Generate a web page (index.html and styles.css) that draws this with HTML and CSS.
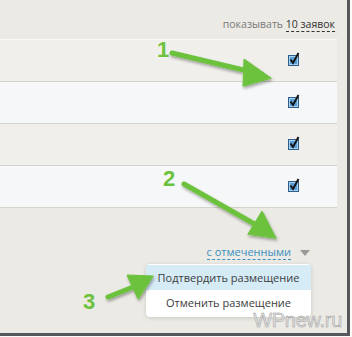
FILE: index.html
```html
<!DOCTYPE html>
<html lang="ru">

<head>
    <meta charset="UTF-8">
    <title>Заявки</title>
    <link rel="stylesheet" href="styles.css">
</head>

<body>
    <div class="frame">
        <!-- Top bar -->
        <div class="toolbar">
            <span class="muted">показывать</span> <span class="dashed">10 заявок</span>
        </div>

        <!-- Rows -->
        <div class="rows">
            <div class="row odd">
                <svg class="check" width="13" height="14" viewBox="0 0 13 14">
                    <rect x="0.5" y="3.5" width="10" height="10" fill="#5b9fd8" stroke="#2d5d88" />
                    <rect x="1.5" y="4.5" width="8" height="8" fill="none" stroke="#a8d2f2" />
                    <path d="M2.5 7.5 L5 11 L10.5 1" fill="none" stroke="#151515" stroke-width="2" />
                </svg>
            </div>
            <div class="row even">
                <svg class="check" width="13" height="14" viewBox="0 0 13 14">
                    <rect x="0.5" y="3.5" width="10" height="10" fill="#5b9fd8" stroke="#2d5d88" />
                    <rect x="1.5" y="4.5" width="8" height="8" fill="none" stroke="#a8d2f2" />
                    <path d="M2.5 7.5 L5 11 L10.5 1" fill="none" stroke="#151515" stroke-width="2" />
                </svg>
            </div>
            <div class="row odd">
                <svg class="check" width="13" height="14" viewBox="0 0 13 14">
                    <rect x="0.5" y="3.5" width="10" height="10" fill="#5b9fd8" stroke="#2d5d88" />
                    <rect x="1.5" y="4.5" width="8" height="8" fill="none" stroke="#a8d2f2" />
                    <path d="M2.5 7.5 L5 11 L10.5 1" fill="none" stroke="#151515" stroke-width="2" />
                </svg>
            </div>
            <div class="row even">
                <svg class="check" width="13" height="14" viewBox="0 0 13 14">
                    <rect x="0.5" y="3.5" width="10" height="10" fill="#5b9fd8" stroke="#2d5d88" />
                    <rect x="1.5" y="4.5" width="8" height="8" fill="none" stroke="#a8d2f2" />
                    <path d="M2.5 7.5 L5 11 L10.5 1" fill="none" stroke="#151515" stroke-width="2" />
                </svg>
            </div>
        </div>

        <div class="bulk">
            <span class="bulk-link">с отмеченными</span>
            <span class="caret"></span>
        </div>

        <!-- Dropdown menu -->
        <div class="menu">
            <div class="menu-item active">Подтвердить размещение</div>
            <div class="menu-item">Отменить размещение</div>
        </div>

        <div class="watermark">WPnew.ru</div>

        <!-- Annotations -->
        <span class="num num-1">1</span>
        <span class="num num-2">2</span>
        <span class="num num-3">3</span>
        <svg class="arrows" width="347" height="333" viewBox="0 0 347 333">
            <defs>
                <filter id="shadow" x="-20%" y="-20%" width="140%" height="140%">
                    <feDropShadow dx="1" dy="2" stdDeviation="1.5" flood-color="#000" flood-opacity="0.35" />
                </filter>
            </defs>
            <g fill="#6cc23c" stroke="#6cc23c" stroke-linecap="round" filter="url(#shadow)">
                <line x1="172" y1="53" x2="252" y2="72" stroke-width="5" />
                <polygon points="271,78 244,59 243,86" stroke-width="1" stroke-linejoin="round" />

                <line x1="184" y1="184" x2="258" y2="226" stroke-width="5" />
                <polygon points="276,238 262,211 248,234" stroke-width="1" stroke-linejoin="round" />

                <line x1="108" y1="297" x2="138" y2="285" stroke-width="5" />
                <polygon points="153,276 127,275 138,299" stroke-width="1" stroke-linejoin="round" />
            </g>
        </svg>
    </div>
</body>

</html>
```

FILE: styles.css
```css
* {
    margin: 0;
    padding: 0;
    box-sizing: border-box;
}

body {
    background: #fbfbfa;
    font-family: 'Open Sans', 'DejaVu Sans', sans-serif;
}

.frame {
    position: relative;
    width: 350px;
    height: 336px;
    background: #ebeae5;
    border-right: 3px solid #55575a;
    border-bottom: 3px solid #55575a;
    overflow: hidden;
}

.toolbar {
    height: 39px;
    padding: 17px 12px 0 0;
    text-align: right;
    font-size: 10.5px;
    line-height: 14px;
}

.muted {
    color: #7a7a7a;
}

.dashed {
    color: #333;
    border-bottom: 1px dashed #333;
}

.rows {
    margin-right: 10px;
    border-top: 1px solid #fafaf7;
}

.row {
    height: 42px;
    display: flex;
    align-items: center;
    justify-content: flex-end;
    padding-right: 36px;
    border-bottom: 1px solid #d3d2cd;
}

.odd {
    background: #f0efeb;
}

.even {
    background: #f5f7f9;
}

.check {
    display: block;
    margin-top: -3px;
}

.bulk {
    display: flex;
    justify-content: flex-end;
    align-items: center;
    gap: 9px;
    margin-top: 37px;
    padding-right: 37px;
    font-size: 11px;
    line-height: 16px;
}

.bulk-link {
    color: #3d8fbf;
    border-bottom: 1px dashed #3d8fbf;
    line-height: 14px;
}

.caret {
    width: 0;
    height: 0;
    border-left: 5px solid transparent;
    border-right: 5px solid transparent;
    border-top: 6px solid #9a9a9a;
}

.menu {
    position: absolute;
    left: 146px;
    top: 264px;
    width: 165px;
    padding: 1px 0 2px;
    background: #fff;
    border-radius: 4px;
    box-shadow: 0 1px 4px rgba(0, 0, 0, 0.15);
    font-size: 11px;
    color: #3c3c3c;
}

.menu-item {
    height: 25px;
    line-height: 25px;
    text-align: center;
}

.menu-item.active {
    background: #d5ecf7;
}

.watermark {
    position: absolute;
    right: 5px;
    bottom: 2px;
    font-family: 'Liberation Sans', sans-serif;
    font-size: 20px;
    line-height: 21px;
    letter-spacing: -0.3px;
    color: #e4e4e4;
    -webkit-text-stroke: 0.5px #9a9a9a;
}

.num {
    position: absolute;
    font-family: 'Liberation Sans', sans-serif;
    font-weight: bold;
    font-size: 22px;
    line-height: 22px;
    color: #6cc23c;
}

.num-1 {
    left: 157px;
    top: 39px;
}

.num-2 {
    left: 163px;
    top: 168px;
}

.num-3 {
    left: 83px;
    top: 291px;
}

.arrows {
    position: absolute;
    left: 0;
    top: 0;
    pointer-events: none;
}
```
